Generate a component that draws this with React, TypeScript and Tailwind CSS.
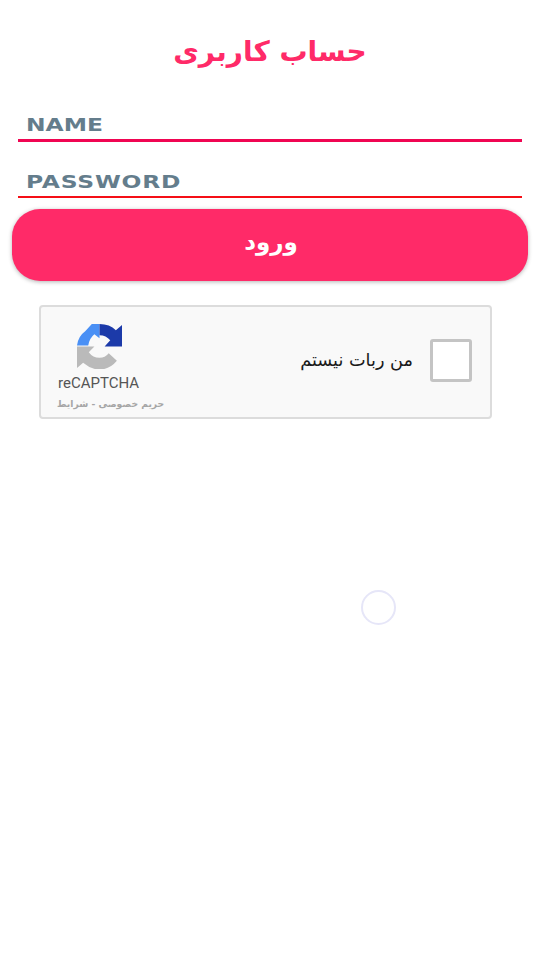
export default function App() {
  return (
    <div className="relative min-h-[960px] w-[540px] bg-white font-['DejaVu_Sans',sans-serif]">
      <div className="flex flex-col">
        <h1 dir="rtl" className="flex h-[106px] items-center justify-center pb-[3px] text-[28px] font-bold leading-none text-[#ff2a68]">
          حساب کاربری
        </h1>
        <div className="mx-[18px] flex h-[36px] items-end border-b-[3px] border-[#f00552] pb-[3px] pl-[8px]">
          <span className="origin-left scale-x-[1.3] text-[18px] font-bold leading-[22px] text-[#647d8c]">NAME</span>
        </div>
        <div className="mx-[18px] mt-[20px] flex h-[36px] items-end border-b-2 border-[#f50f16] pb-[3px] pl-[8px]">
          <span className="origin-left scale-x-[1.3] text-[18px] font-bold leading-[22px] tracking-[0.6px] text-[#647d8c]">PASSWORD</span>
        </div>
        <button className="mx-[12px] mt-[11px] flex h-[72px] items-center justify-center rounded-[28px] bg-[#ff2a68] pb-[5px] pl-[2px] text-[23px] font-bold text-white shadow-[0_1px_4px_rgba(0,0,0,0.3)]">
          ورود
        </button>
        <div className="ml-[39px] mt-[24px] flex h-[114px] w-[453px] items-start justify-between rounded-[4px] border-2 border-[#dcdcdc] bg-[#f9f9f9] pl-[16px] pr-[18px]">
          <div className="flex flex-col items-start pt-[17px]">
            <svg viewBox="0 0 44 44" className="ml-[20px] h-[45px] w-[45px]">
              <path fill="#4a90f5" d="M0 21 Q1 12 8 7 L14.5 0 H22 V14 L17 10 Q12 14 11 21 Z" />
              <path fill="#1c3aa9" d="M22 0 Q32 0 38 6 L44 1 V22 H27 L32.5 16 Q28.5 11 22 11 Z" />
              <path fill="#bababa" d="M0 22 H17 L11.5 27.5 Q15.5 33 22 33 Q27.5 33 31 28.5 L39 36 Q32 44.5 22 44.5 Q13.5 44.5 6 38 L0 43 Z" />
            </svg>
            <span className="ml-[1px] mt-[4px] font-['Roboto',sans-serif] text-[15px] leading-[20px] text-[#555555]">reCAPTCHA</span>
            <span dir="rtl" className="mt-[4px] text-[9.2px] font-bold leading-[14px] text-[#a6a6a6]">حریم خصوصی - شرایط</span>
          </div>
          <div className="flex items-center gap-[17px] pt-[32px]">
            <span dir="rtl" className="text-[17.7px] leading-none text-[#1a1a1a]">من ربات نیستم</span>
            <div className="h-[43px] w-[42px] rounded-[3px] border-[3px] border-[#c4c4c4] bg-white" />
          </div>
        </div>
      </div>
      <div className="absolute left-[361px] top-[590px] h-[35px] w-[35px] rounded-full border-[2px] border-[#e6e6f8]" />
    </div>
  );
}
